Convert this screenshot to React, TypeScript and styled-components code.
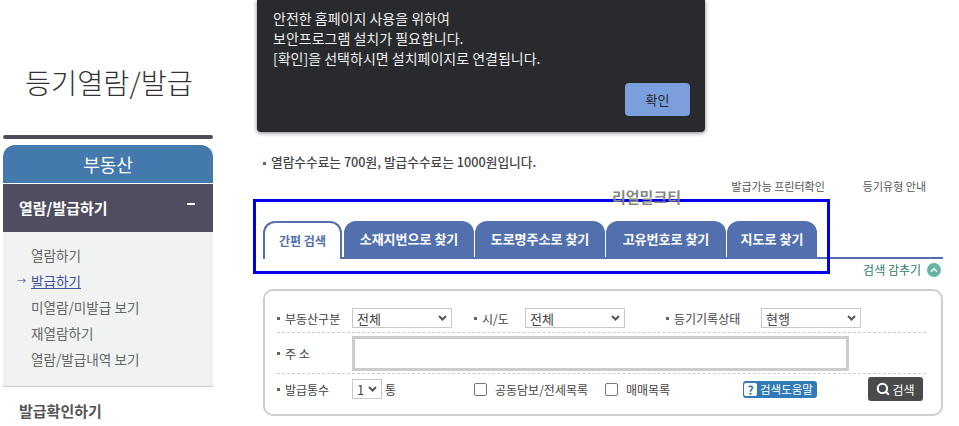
import React from 'react';
import styled, { createGlobalStyle } from 'styled-components';
import { ChevronUp, Search } from 'lucide-react';

const Global = createGlobalStyle`
  html, body { margin: 0; padding: 0; background: #fff; overflow: hidden; }
  body { font-family: "Noto Sans CJK KR", "Liberation Sans", sans-serif; color: #444; }
  * { box-sizing: border-box; }
`;

const Page = styled.div`
  position: relative;
  width: 959px;
  height: 426px;
  overflow: hidden;
  display: flex;
  padding-left: 3px;
`;

const Sidebar = styled.aside`
  width: 210px;
  flex-shrink: 0;
`;

const PageTitle = styled.h1`
  margin: 0;
  height: 135px;
  padding-top: 63px;
  padding-left: 22px;
  font-size: 28.4px;
  line-height: 38px;
  font-weight: 300;
  color: #333;
  white-space: nowrap;
`;

const TitleBar = styled.div`
  height: 4px;
  border-radius: 2px;
  background: #4f4e60;
  margin-bottom: 6px;
`;

const MenuHead = styled.div`
  height: 38px;
  border-radius: 12px 12px 0 0;
  background: #4379ad;
  color: #fff;
  font-size: 18px;
  line-height: 38px;
  text-align: center;
`;

const MenuActive = styled.div`
  height: 48px;
  margin-top: 1px;
  padding: 0 16px 2px;
  display: flex;
  align-items: center;
  justify-content: space-between;
  background: #4f4e60;
  color: #fff;
  font-size: 15px;
  font-weight: 700;
`;

const Dash = styled.span`
  width: 8px;
  height: 2px;
  margin-top: -6px;
  margin-right: 2px;
  background: #fff;
`;

const SubMenu = styled.ul`
  margin: 0;
  padding: 10px 0 14px 28px;
  height: 155px;
  list-style: none;
  background: #f1f3f2;
  border-bottom: 1px solid #ccc;
`;

const SubItem = styled.li<{ $active?: boolean }>`
  position: relative;
  height: 26px;
  font-size: 13.6px;
  line-height: 26px;
  color: ${p => (p.$active ? '#3f51a3' : '#666')};
  text-decoration: ${p => (p.$active ? 'underline' : 'none')};
  white-space: nowrap;
`;

const Arrow = styled.span`
  position: absolute;
  left: -14px;
  font-size: 9px;
  color: #3f51a3;
`;

const MenuPlain = styled.div`
  padding: 13px 16px 0;
  font-size: 15px;
  font-weight: 700;
  color: #555;
`;

const Main = styled.main`
  width: 680px;
  margin-left: 50px;
  flex-shrink: 0;
`;

const Notice = styled.p`
  margin: 0;
  padding: 152px 0 0 0;
  height: 176px;
  font-size: 12.7px;
  line-height: 20px;
  font-weight: 500;
  color: #444;
  white-space: nowrap;
`;

const Bullet = styled.span`
  display: inline-block;
  width: 3px;
  height: 3px;
  margin-right: 5px;
  vertical-align: middle;
  background: #666;
`;

const TopLinks = styled.div`
  display: flex;
  justify-content: flex-end;
  gap: 38px;
  height: 45px;
  padding: 3px 17px 0 0;
  font-size: 11px;
  line-height: 14px;
  color: #555;
`;

const TabRow = styled.div`
  display: flex;
  gap: 1px;
  height: 38px;
  border-bottom: 2px solid #5270ae;
`;

const Tab = styled.div<{ $active?: boolean; $w: number }>`
  width: ${p => p.$w}px;
  height: ${p => (p.$active ? 38 : 36)}px;
  margin-right: ${p => (p.$active ? 1 : 0)}px;
  border-radius: 12px 12px 0 0;
  border: ${p => (p.$active ? '2px solid #5270ae' : 'none')};
  border-bottom: none;
  background: ${p => (p.$active ? '#fff' : '#5270ae')};
  color: ${p => (p.$active ? '#5270ae' : '#fff')};
  font-size: ${p => (p.$active ? 12 : 13)}px;
  font-weight: 700;
  line-height: 36px;
  text-align: center;
  white-space: nowrap;
`;

const ToggleRow = styled.div`
  display: flex;
  justify-content: flex-end;
  align-items: center;
  gap: 6px;
  height: 21px;
  font-size: 12px;
  color: #2e7a68;
`;

const ToggleIcon = styled.span`
  width: 14px;
  height: 14px;
  margin-right: 2px;
  border-radius: 50%;
  background: #64b5a7;
  color: #fff;
  display: flex;
  align-items: center;
  justify-content: center;
`;

const SearchBox = styled.section`
  width: 680px;
  height: 127px;
  margin-top: 9px;
  padding: 13px 15px 0 12px;
  border: 2px solid #cfcfcf;
  border-radius: 10px;
  font-size: 12px;
  color: #444;
`;

const Row = styled.div<{ $h: number; $last?: boolean }>`
  display: flex;
  align-items: center;
  height: ${p => p.$h}px;
  border-bottom: ${p => (p.$last ? 'none' : '1px dashed #ccc')};
  white-space: nowrap;
`;

const Label = styled.span<{ $w: number; $pl?: number }>`
  display: flex;
  align-items: center;
  width: ${p => p.$w}px;
  padding-left: ${p => p.$pl ?? 0}px;
  flex-shrink: 0;
`;

const FakeSelect = styled.div<{ $w: number }>`
  width: ${p => p.$w}px;
  height: 20px;
  flex-shrink: 0;
  padding: 0 4px;
  display: flex;
  align-items: center;
  justify-content: space-between;
  border: 1px solid #c8c8c8;
  background: #fff;
  font-size: 13px;
`;

const Chevron = () => (
  <svg width="9" height="6" viewBox="0 0 9 6">
    <path d="M1 1l3.5 3.5L8 1" fill="none" stroke="#555" strokeWidth="2" />
  </svg>
);

const AddressInput = styled.div`
  width: 497px;
  height: 35px;
  margin-top: 1px;
  border: 3px solid #ccc;
  background: #fff;
`;

const CheckGroup = styled.label<{ $w: number }>`
  display: flex;
  align-items: center;
  gap: 8px;
  width: ${p => p.$w}px;
  flex-shrink: 0;
`;

const CheckBox = styled.span`
  width: 13px;
  height: 13px;
  border: 1px solid #777;
  border-radius: 2px;
  background: #fff;
`;

const HelpButton = styled.span`
  display: flex;
  align-items: center;
  gap: 3px;
  width: 74px;
  height: 17px;
  margin-left: 2px;
  padding-left: 1px;
  border-radius: 3px;
  background: #2f7ab7;
  color: #fff;
  font-size: 11.5px;
`;

const HelpMark = styled.span`
  width: 13px;
  height: 13px;
  border-radius: 2px;
  background: #fff;
  color: #2f7ab7;
  font-size: 12px;
  font-weight: 700;
  line-height: 13px;
  text-align: center;
`;

const SearchButton = styled.span`
  display: flex;
  align-items: center;
  justify-content: center;
  gap: 2px;
  width: 55px;
  height: 24px;
  margin-left: 51px;
  border-radius: 3px;
  background: #4a4a4a;
  color: #fff;
  font-size: 12px;
`;

const Modal = styled.div`
  position: absolute;
  left: 257px;
  top: 0;
  width: 448px;
  height: 132px;
  padding: 8px 16px 0;
  border-radius: 0 0 4px 4px;
  background: #292a2d;
  box-shadow: 0 1px 4px rgba(0, 0, 0, 0.5);
  color: #eee;
  font-size: 14px;
  line-height: 20px;
`;

const ModalLine = styled.div`
  white-space: nowrap;
`;

const ModalButton = styled.div`
  position: absolute;
  right: 15px;
  bottom: 16px;
  width: 65px;
  height: 33px;
  border-radius: 4px;
  background: #7b9fdc;
  color: #26282c;
  font-size: 13px;
  line-height: 33px;
  text-align: center;
`;

const Highlight = styled.div`
  position: absolute;
  left: 253px;
  top: 199px;
  width: 577px;
  height: 75px;
  border: 3px solid #0000ee;
  pointer-events: none;
`;

const FloatingLabel = styled.div`
  position: absolute;
  left: 612px;
  top: 187px;
  font-size: 15px;
  line-height: 20px;
  font-weight: 700;
  color: #888;
`;

const tabs = [
  { label: '간편 검색', w: 79, active: true },
  { label: '소재지번으로 찾기', w: 130 },
  { label: '도로명주소로 찾기', w: 130 },
  { label: '고유번호로 찾기', w: 120 },
  { label: '지도로 찾기', w: 90 },
];

const App: React.FC = () => (
  <Page>
    <Global />
    <Sidebar>
      <PageTitle>등기열람/발급</PageTitle>
      <TitleBar />
      <MenuHead>부동산</MenuHead>
      <MenuActive>
        열람/발급하기
        <Dash />
      </MenuActive>
      <SubMenu>
        <SubItem>열람하기</SubItem>
        <SubItem $active>
          <Arrow>→</Arrow>
          발급하기
        </SubItem>
        <SubItem>미열람/미발급 보기</SubItem>
        <SubItem>재열람하기</SubItem>
        <SubItem>열람/발급내역 보기</SubItem>
      </SubMenu>
      <MenuPlain>발급확인하기</MenuPlain>
    </Sidebar>
    <Main>
      <Notice>
        <Bullet />
        열람수수료는 700원, 발급수수료는 1000원입니다.
      </Notice>
      <TopLinks>
        <span>발급가능 프린터확인</span>
        <span>등기유형 안내</span>
      </TopLinks>
      <TabRow>
        {tabs.map(t => (
          <Tab key={t.label} $w={t.w} $active={t.active}>
            {t.label}
          </Tab>
        ))}
      </TabRow>
      <ToggleRow>
        검색 감추기
        <ToggleIcon>
          <ChevronUp size={10} strokeWidth={4} />
        </ToggleIcon>
      </ToggleRow>
      <SearchBox>
        <Row $h={29}>
          <Label $w={75}><Bullet />부동산구분</Label>
          <FakeSelect $w={100}>전체<Chevron /></FakeSelect>
          <Label $w={73} $pl={22}><Bullet />시/도</Label>
          <FakeSelect $w={100}>전체<Chevron /></FakeSelect>
          <Label $w={136} $pl={41}><Bullet />등기기록상태</Label>
          <FakeSelect $w={100}>현행<Chevron /></FakeSelect>
        </Row>
        <Row $h={41}>
          <Label $w={75}><Bullet />주 소</Label>
          <AddressInput />
        </Row>
        <Row $h={30} $last>
          <Label $w={75}><Bullet />발급통수</Label>
          <FakeSelect $w={30}>1<Chevron /></FakeSelect>
          <Label $w={92} $pl={3}>통</Label>
          <CheckGroup $w={131}><CheckBox />공동담보/전세목록</CheckGroup>
          <CheckGroup $w={136}><CheckBox />매매목록</CheckGroup>
          <HelpButton><HelpMark>?</HelpMark>검색도움말</HelpButton>
          <SearchButton><Search size={14} strokeWidth={3.5} />검색</SearchButton>
        </Row>
      </SearchBox>
    </Main>
    <Modal>
      <ModalLine>안전한 홈페이지 사용을 위하여</ModalLine>
      <ModalLine>보안프로그램 설치가 필요합니다.</ModalLine>
      <ModalLine>[확인]을 선택하시면 설치페이지로 연결됩니다.</ModalLine>
      <ModalButton>확인</ModalButton>
    </Modal>
    <Highlight />
    <FloatingLabel>리얼밀크티</FloatingLabel>
  </Page>
);

export default App;
